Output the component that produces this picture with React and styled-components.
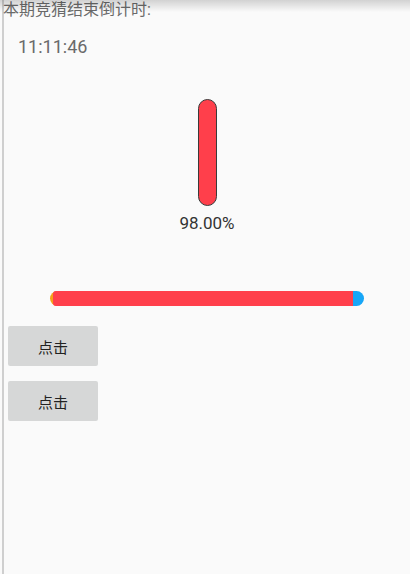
import React from 'react';
import styled, { createGlobalStyle } from 'styled-components';

const GlobalStyle = createGlobalStyle`
  html, body {
    margin: 0;
    padding: 0;
    background: #fafafa;
  }
  body {
    font-family: Roboto, "Noto Sans CJK SC", "Noto Sans", sans-serif;
  }
`;

const Page = styled.div`
  position: relative;
  box-sizing: border-box;
  height: 574px;
  margin-left: 2px;
  border-left: 2px solid #cfcfcf;
  background: #fafafa;
  display: flex;
  flex-direction: column;
`;

const TopShadow = styled.div`
  position: absolute;
  top: 0;
  left: -4px;
  right: 0;
  height: 12px;
  background: linear-gradient(to bottom, rgba(0, 0, 0, 0.16), rgba(0, 0, 0, 0));
  pointer-events: none;
`;

const Title = styled.div`
  margin-left: -1px;
  font-size: 16px;
  line-height: 20px;
  color: #6a6a6a;
`;

const Timer = styled.div`
  margin-top: 15px;
  padding-left: 14px;
  font-size: 18px;
  line-height: 24px;
  color: #6a6a6a;
`;

const VerticalBar = styled.div`
  align-self: center;
  margin-top: 40px;
  box-sizing: border-box;
  width: 19px;
  height: 107px;
  border-radius: 10px;
  border: 1px solid #3a3a3a;
  background: #ff3f4b;
`;

const Percent = styled.div`
  align-self: center;
  margin-top: 7px;
  font-size: 17px;
  line-height: 20px;
  color: #333;
`;

const Track = styled.div`
  align-self: center;
  margin-top: 58px;
  width: 314px;
  height: 15px;
  border-radius: 8px;
  padding-left: 3px;
  box-sizing: border-box;
  background: linear-gradient(to right, #f5a01a 50%, #17a6f7 50%);
  display: flex;
`;

const Fill = styled.div`
  width: ${(props) => props.$width}px;
  height: 100%;
  border-radius: 3px 0 0 3px;
  background: #ff3f4b;
`;

const Button = styled.button`
  margin: ${(props) => props.$top}px 0 0 4px;
  width: 90px;
  height: 40px;
  border: none;
  border-radius: 2px;
  background: #d6d7d7;
  font-family: Roboto, "Noto Sans CJK SC", sans-serif;
  font-size: 15px;
  color: #222;
  padding: 0;
`;

export default function App() {
  return (
    <>
      <GlobalStyle />
      <Page>
        <TopShadow />
        <Title>本期竞猜结束倒计时:</Title>
        <Timer>11:11:46</Timer>
        <VerticalBar />
        <Percent>98.00%</Percent>
        <Track>
          <Fill $width={300} />
        </Track>
        <Button $top={20}>点击</Button>
        <Button $top={15}>点击</Button>
      </Page>
    </>
  );
}
